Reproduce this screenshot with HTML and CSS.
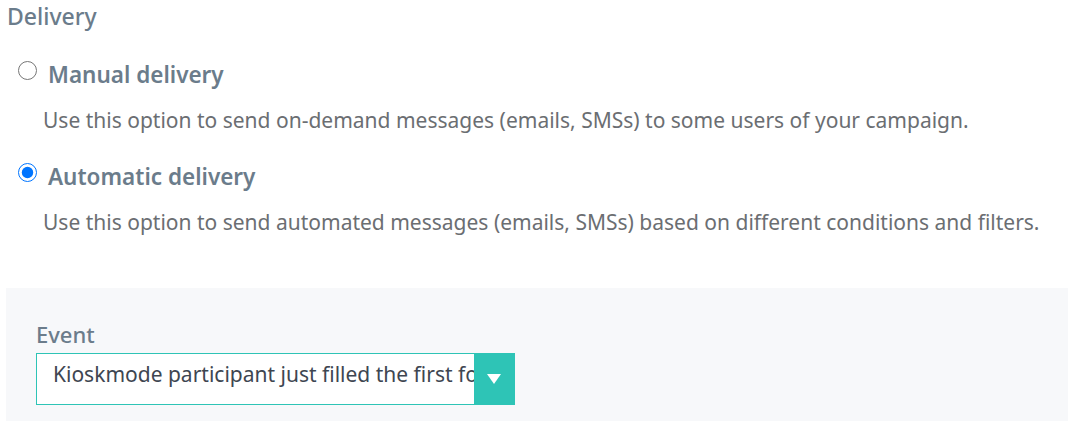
FILE: index.html
```html
<!DOCTYPE html>
<html lang="en">
<head>
<meta charset="utf-8">
<title>Delivery</title>
<link rel="stylesheet" href="styles.css">
</head>
<body>
<div class="delivery">
  <div class="section-title">Delivery</div>
  <div class="option">
    <label class="option-head">
      <input type="radio" name="delivery" class="radio">
      <span class="option-title">Manual delivery</span>
    </label>
    <p class="option-desc">Use this option to send on-demand messages (emails, SMSs) to some users of your campaign.</p>
  </div>
  <div class="option">
    <label class="option-head">
      <input type="radio" name="delivery" class="radio" checked>
      <span class="option-title">Automatic delivery</span>
    </label>
    <p class="option-desc">Use this option to send automated messages (emails, SMSs) based on different conditions and filters.</p>
  </div>
  <div class="panel">
    <div class="field-label">Event</div>
    <div class="select">
      <div class="select-value">Kioskmode participant just filled the first form</div>
      <div class="select-arrow">
        <svg width="14" height="10" viewBox="0 0 14 10"><path d="M0 0 H14 L7 10 Z" fill="#ffffff"/></svg>
      </div>
    </div>
  </div>
</div>
</body>
</html>
```
FILE: styles.css
```css
html, body {
  margin: 0;
  padding: 0;
  background: #ffffff;
}
body {
  font-family: "Noto Sans", "Open Sans", sans-serif;
  width: 1068px;
  height: 421px;
  overflow: hidden;
}
.delivery {
  display: flex;
  flex-direction: column;
}
.section-title {
  font-size: 23px;
  font-weight: 500;
  color: #6b7c8b;
  line-height: 30px;
  padding: 1px 0 0 7px;
  height: 60px;
  box-sizing: border-box;
}
.option {
  display: flex;
  flex-direction: column;
}
.option + .option {
  margin-top: 27px;
}
.option-head {
  display: flex;
  align-items: flex-start;
  gap: 11px;
  padding-left: 18px;
  height: 30px;
}
.radio {
  width: 19px;
  height: 19px;
  margin: 1px 0 0 0;
}
.option-title {
  font-size: 22.5px;
  font-weight: 600;
  color: #6b7c8b;
  line-height: 30px;
}
.option-desc {
  margin: 15px 0 0 0;
  padding-left: 43px;
  font-size: 21px;
  color: #6b6e72;
  line-height: 30px;
}
.panel {
  margin: 51px 0 0 6px;
  background: #f7f8fa;
  height: 133px;
  padding: 31px 0 0 30px;
  box-sizing: border-box;
}
.field-label {
  font-size: 22px;
  font-weight: 500;
  color: #6b7c8b;
  line-height: 30px;
  height: 34px;
}
.select {
  display: flex;
  width: 479px;
  height: 52px;
  border: 1px solid #2ec4b6;
  box-sizing: border-box;
  background: #ffffff;
}
.select-value {
  flex: 1;
  min-width: 0;
  overflow: hidden;
  white-space: nowrap;
  font-size: 21px;
  color: #3e4651;
  padding: 0 8px 10px 16px;
  line-height: 40px;
}
.select-arrow {
  width: 40px;
  background: #2ec4b6;
  display: flex;
  align-items: center;
  justify-content: center;
}
```
